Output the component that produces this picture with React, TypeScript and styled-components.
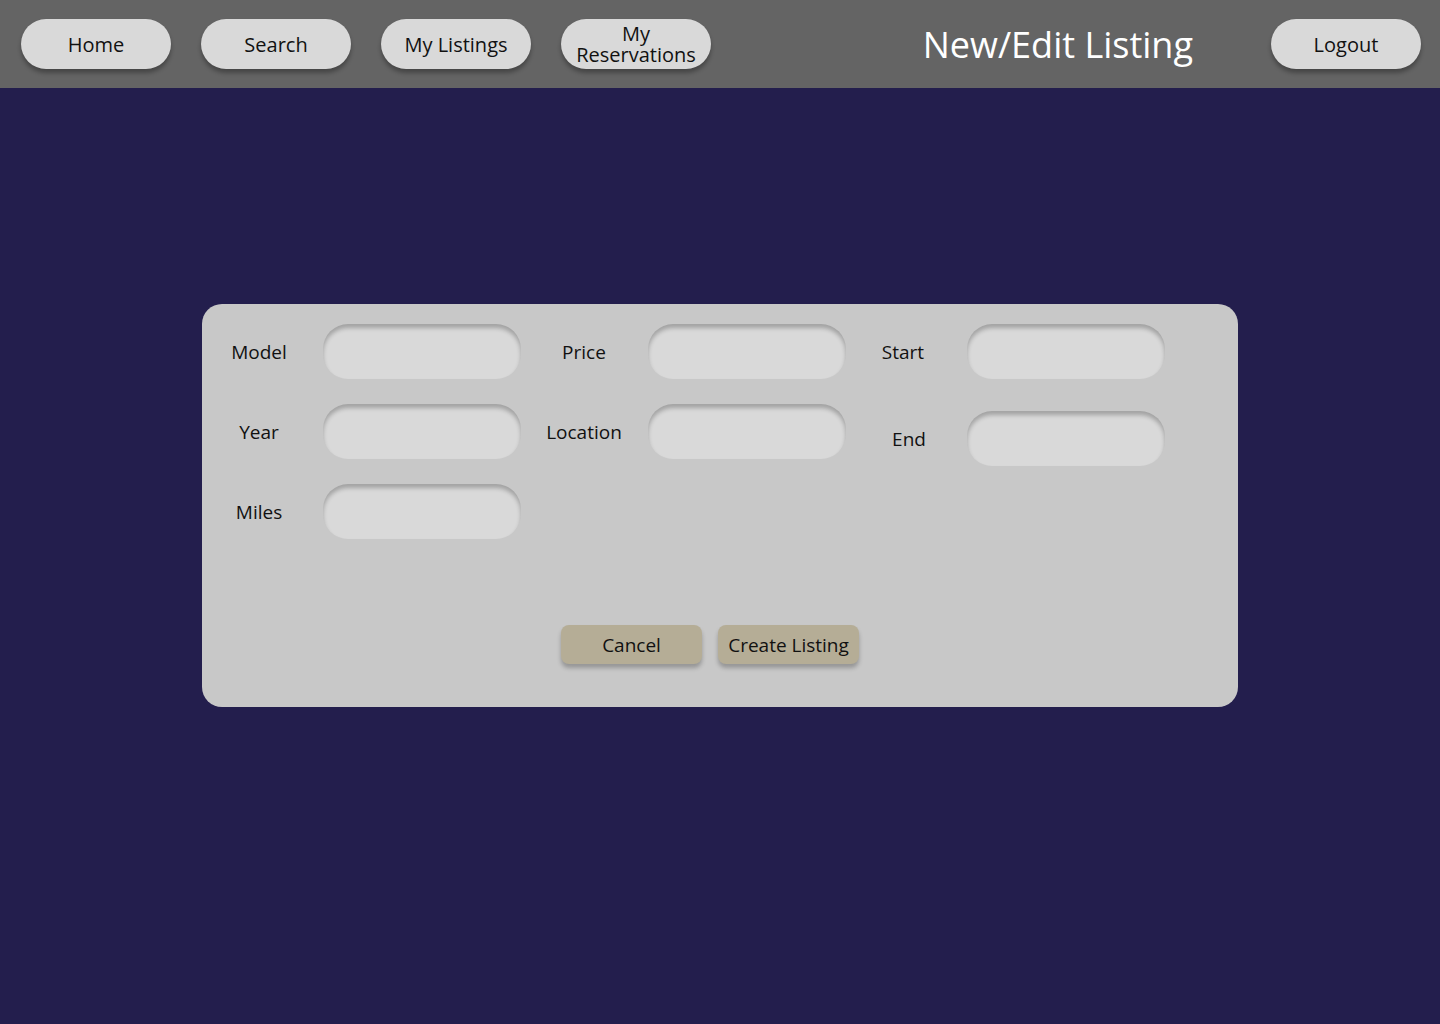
import styled, { createGlobalStyle } from "styled-components";

const GlobalStyle = createGlobalStyle`
  * {
    box-sizing: border-box;
  }

  body {
    margin: 0;
    background-color: #231e4d;
    font-family: "Open Sans", "Noto Sans", sans-serif;
  }
`;

const StyledPage = styled.div`
  min-height: 1024px;
  background-color: #231e4d;
`;

const StyledHeader = styled.header`
  height: 88px;
  background-color: #646464;
  display: flex;
  align-items: center;
  padding: 0 19px 0 21px;
`;

const StyledNav = styled.nav`
  display: flex;
  align-items: center;
  gap: 30px;
`;

const StyledNavButton = styled.button`
  width: 150px;
  height: 50px;
  flex-shrink: 0;
  border: none;
  border-radius: 25px;
  background-color: #d9d9d9;
  box-shadow: 0 4px 4px rgba(0, 0, 0, 0.3);
  padding: 0 14px;
  font-family: inherit;
  font-size: 20px;
  line-height: 21px;
  color: #111;
  cursor: pointer;
`;

const StyledTitle = styled.h1`
  margin: 0 78px 0 auto;
  font-size: 36px;
  font-weight: 400;
  color: #ffffff;
`;

const StyledCard = styled.form`
  width: 1036px;
  height: 403px;
  margin: 216px auto 0 auto;
  background-color: #c8c8c8;
  border-radius: 20px;
  padding: 20px 0 0 7px;
  display: flex;
  flex-direction: column;
`;

const StyledColumns = styled.div`
  display: flex;
  align-items: flex-start;
  height: 215px;
`;

const StyledColumn = styled.div<{ $width?: number }>`
  width: ${({ $width }) => ($width ? `${$width}px` : "auto")};
  flex-shrink: 0;
  display: flex;
  flex-direction: column;
  gap: 25px;
`;

const StyledField = styled.div<{ $top?: number }>`
  display: flex;
  align-items: center;
  margin-top: ${({ $top }) => $top ?? 0}px;
`;

const StyledLabel = styled.label<{ $shift?: number }>`
  width: 100px;
  flex-shrink: 0;
  margin-right: 14px;
  padding-left: ${({ $shift }) => $shift ?? 0}px;
  text-align: center;
  font-size: 19px;
  color: #111;
`;

const StyledInput = styled.input`
  width: 198px;
  height: 55px;
  flex-shrink: 0;
  border: none;
  outline: none;
  border-radius: 25px;
  background-color: #d9d9d9;
  box-shadow: inset 0 4px 4px rgba(0, 0, 0, 0.25);
  padding: 0 20px;
  font-family: inherit;
  font-size: 18px;
`;

const StyledActions = styled.div`
  display: flex;
  justify-content: center;
  gap: 16px;
  padding-right: 27px;
  margin-top: 86px;
`;

const StyledActionButton = styled.button`
  width: 141px;
  height: 39px;
  border: none;
  border-radius: 8px;
  background-color: #b5ad96;
  box-shadow: 0 4px 4px rgba(0, 0, 0, 0.25);
  padding: 0;
  font-family: inherit;
  font-size: 19px;
  color: #111;
  cursor: pointer;
`;

const Field = ({ label, top, shift }: { label: string; top?: number; shift?: number }) => (
  <StyledField $top={top}>
    <StyledLabel $shift={shift}>{label}</StyledLabel>
    <StyledInput type="text" />
  </StyledField>
);

const App = () => {
  return (
    <StyledPage>
      <GlobalStyle />
      <StyledHeader>
        <StyledNav>
          <StyledNavButton>Home</StyledNavButton>
          <StyledNavButton>Search</StyledNavButton>
          <StyledNavButton>My Listings</StyledNavButton>
          <StyledNavButton>My Reservations</StyledNavButton>
        </StyledNav>
        <StyledTitle>New/Edit Listing</StyledTitle>
        <StyledNavButton>Logout</StyledNavButton>
      </StyledHeader>

      <StyledCard onSubmit={(e) => e.preventDefault()}>
        <StyledColumns>
          <StyledColumn $width={325}>
            <Field label="Model" />
            <Field label="Year" />
            <Field label="Miles" />
          </StyledColumn>
          <StyledColumn $width={319}>
            <Field label="Price" />
            <Field label="Location" />
          </StyledColumn>
          <StyledColumn>
            <Field label="Start" />
            <Field label="End" top={7} shift={12} />
          </StyledColumn>
        </StyledColumns>
        <StyledActions>
          <StyledActionButton type="button">Cancel</StyledActionButton>
          <StyledActionButton type="submit">Create Listing</StyledActionButton>
        </StyledActions>
      </StyledCard>
    </StyledPage>
  );
};

export default App;
